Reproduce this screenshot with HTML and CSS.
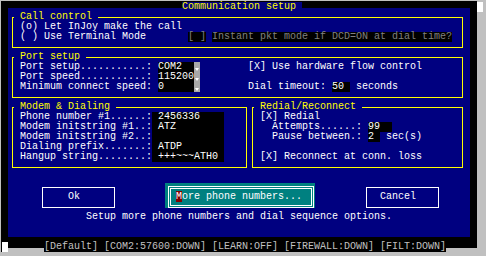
FILE: index.html
```html
<!DOCTYPE html>
<html lang="en">
<head>
    <meta charset="utf-8">
    <title>Communication setup</title>
    <link rel="stylesheet" href="styles.css">
</head>
<body>
<div class="window">
    <div class="screen">
        <div class="dialog">
            <div class="titlebar"><span class="title">Communication setup </span></div>
            <div class="content">
                <div class="group">
                    <div class="legend"><span> Call control </span></div>
                    <div class="row">(o) Let InJoy make the call</div>
                    <div class="row">( ) Use Terminal Mode       <span class="dim">[ ]</span> <span class="dim">Instant pkt mode if DCD=ON at dial time?</span></div>
                </div>

                <div class="group">
                    <div class="legend"><span> Port setup </span></div>
                    <div class="cols">
                        <div>
                            <div class="row">Port setup...........: <span class="field w6">COM2</span><span class="drop"></span></div>
                            <div class="row">Port speed...........: <span class="field w6">115200</span><span class="drop"></span></div>
                            <div class="row">Minimum connect speed: <span class="field w6">0</span><span class="drop"></span></div>
                        </div>
                        <div>
                            <div class="row">[X] Use hardware flow control</div>
                            <div class="row"></div>
                            <div class="row">Dial timeout: <span class="field w3">50</span> seconds</div>
                        </div>
                    </div>
                </div>

                <div class="pair">
                    <div class="group modem">
                        <div class="legend"><span> Modem &amp; Dialing </span></div>
                        <div class="row">Phone number #1......:<span class="field w12"> 2456336</span></div>
                        <div class="row">Modem initstring #1..:<span class="field w12"> ATZ</span></div>
                        <div class="row">Modem initstring #2..:<span class="field w12"> </span></div>
                        <div class="row">Dialing prefix.......:<span class="field w12"> ATDP</span></div>
                        <div class="row">Hangup string........:<span class="field w12"> +++~~~ATH0</span></div>
                    </div>
                    <div class="group redial">
                        <div class="legend"><span> Redial/Reconnect </span></div>
                        <div class="row">[X] Redial</div>
                        <div class="row">  Attempts......: <span class="field w4">99</span></div>
                        <div class="row">  Pause between.: <span class="field w2">2</span> sec(s)</div>
                        <div class="row"></div>
                        <div class="row">[X] Reconnect at conn. loss</div>
                    </div>
                </div>

                <div class="buttons">
                    <div class="btn ok">Ok</div>
                    <div class="btn-focus"><div class="btn-inner"><span class="hot">M</span>ore phone numbers...</div></div>
                    <div class="btn cancel">Cancel</div>
                </div>
                <div class="row help">Setup more phone numbers and dial sequence options.</div>
                <div class="row"></div>
            </div>
            <div class="bottom"></div>
        </div>
        <div class="status"><span class="cursor"></span><span class="status-text">[Default] [COM2:57600:DOWN] [LEARN:OFF] [FIREWALL:DOWN] [FILT:DOWN]</span></div>
    </div>
    <div class="scroll"><div class="thumb"></div></div>
</div>
</body>
</html>
```

FILE: styles.css
```css
body {margin:0; background:#c0c0c0; overflow:hidden;}
.window {display:flex; width:486px; height:256px;}

/* text mode screen: 6x10 cells, col 0 at x=2, row 0 at y=2 */
.screen {width:476px; height:251px; margin:1px 0 0 1px; padding:1px 0 0 1px; box-sizing:border-box; background:#000; color:#fff; font:10px/10px "Liberation Mono", monospace; overflow:hidden;}
.row {height:10px; white-space:pre;}

.dialog {width:462px; margin-left:6px;}
.titlebar {height:10px; padding-left:174px; background:linear-gradient(#000 6px, #000080 6px);}
.title {display:inline-block; height:10px; vertical-align:top; white-space:pre; background:#000080; color:#ffff00;}
.content {display:flex; flex-direction:column; background:#000080;}
.bottom {height:10px; background:linear-gradient(#000080 5px, #000 5px);}

.group {width:451px; margin:5px 0 4px 4px; padding:0 0 5px 7px; box-sizing:border-box; border:1px solid #ffff00;}
.legend {height:10px; margin:-6px 0 0 -6px;}
.legend span {display:inline-block; height:10px; vertical-align:top; white-space:pre; background:#000080; color:#ffff00;}
.cols {display:grid; grid-template-columns:228px 1fr;}
.pair {display:flex; gap:5px; margin:5px 0 4px 4px;}
.pair .group {margin:0;}
.modem {width:235px;}
.redial {width:211px;}

.dim {display:inline-block; height:10px; vertical-align:top; background:#000; color:#808080;}
.field {display:inline-block; height:10px; vertical-align:top; white-space:pre; background:#000; color:#fff;}
.w2 {width:2ch;}
.w3 {width:3ch;}
.w4 {width:4ch;}
.w6 {width:6ch;}
.w12 {width:12ch;}
.drop {display:inline-block; position:relative; width:6px; height:10px; vertical-align:top; background:#a8a8a8;}
.drop::after {content:""; position:absolute; left:1px; bottom:1px; border-left:2px solid transparent; border-right:2px solid transparent; border-top:3px solid #fff;}

.buttons {display:flex; align-items:flex-start; height:40px;}
.btn {height:21px; width:73px; box-sizing:border-box; border:1px solid #fff; padding-top:4px; margin-top:15px;}
.ok {margin-left:34px; padding-left:25px;}
.cancel {margin-left:51px; padding-left:13px;}
.btn-focus {width:150px; height:25px; margin:11px 0 0 50px; padding:3px 0 0 3px; box-sizing:border-box; background:#008080;}
.btn-inner {width:146px; height:22px; box-sizing:border-box; border:3px double #fff; padding:3px 0 0 5px; white-space:pre;}
.hot {background:#800000;}
.help {margin-left:78px;}

.status {display:flex; height:10px; background:linear-gradient(#000 6px, #c0c0c0 6px);}
.cursor {width:6px; height:10px; background:#fff;}
.status-text {margin-left:36px; height:10px; white-space:pre; background:#000; color:#c0c0c0;}

.scroll {width:9px; height:256px; background:#c0c0c0;}
.thumb {width:6px; height:10px; margin-top:2px; background:#fff;}
```
